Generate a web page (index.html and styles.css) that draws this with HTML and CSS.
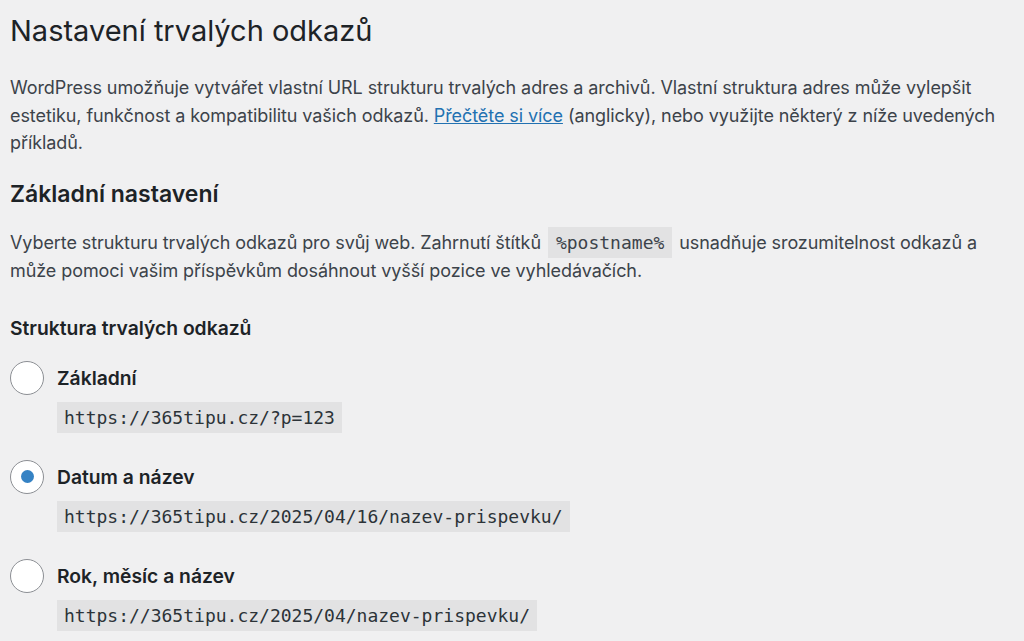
FILE: index.html
```html
<!DOCTYPE html>
<html lang="cs">
<head>
<meta charset="utf-8">
<title>Nastavení trvalých odkazů</title>
<link rel="stylesheet" href="styles.css">
</head>
<body>
<div class="wrap">
  <h1 class="page-title">Nastavení trvalých odkazů</h1>
  <p class="intro">WordPress umožňuje vytvářet vlastní URL strukturu trvalých adres a archivů. Vlastní struktura adres může vylepšit estetiku, funkčnost a kompatibilitu vašich odkazů. <a href="#" class="link">Přečtěte si více</a> (anglicky), nebo využijte některý z níže uvedených příkladů.</p>
  <h2 class="section-title">Základní nastavení</h2>
  <p class="desc">Vyberte strukturu trvalých odkazů pro svůj web. Zahrnutí štítků <code class="tag">%postname%</code> usnadňuje srozumitelnost odkazů a může pomoci vašim příspěvkům dosáhnout vyšší pozice ve vyhledávačích.</p>
  <h3 class="field-title">Struktura trvalých odkazů</h3>
  <div class="options">
    <div class="option">
      <label class="option-label"><input type="radio" name="perm" class="radio"><span>Základní</span></label>
      <code class="example">https://365tipu.cz/?p=123</code>
    </div>
    <div class="option">
      <label class="option-label"><input type="radio" name="perm" class="radio" checked><span>Datum a název</span></label>
      <code class="example">https://365tipu.cz/2025/04/16/nazev-prispevku/</code>
    </div>
    <div class="option">
      <label class="option-label"><input type="radio" name="perm" class="radio"><span>Rok, měsíc a název</span></label>
      <code class="example">https://365tipu.cz/2025/04/nazev-prispevku/</code>
    </div>
  </div>
</div>
</body>
</html>
```
FILE: styles.css
```css
html, body {
  margin: 0;
  padding: 0;
  background: #f0f0f1;
}
body {
  font-family: Inter, "Noto Sans", sans-serif;
  color: #3c434a;
  font-size: 18px;
  letter-spacing: -0.08px;
  overflow: hidden;
}
.wrap {
  width: 1010px;
  padding: 10px 0 0 10px;
}
.page-title {
  margin: 0;
  font-size: 29px;
  font-weight: 400;
  line-height: 42px;
  letter-spacing: 0;
  color: #1d2327;
}
.intro {
  margin: 22px 0 0;
  line-height: 27.5px;
}
.link {
  color: #2271b1;
  text-decoration: underline;
}
.section-title {
  margin: 22px 0 0;
  font-size: 23px;
  font-weight: 600;
  line-height: 30px;
  letter-spacing: 0;
  color: #1d2327;
}
.desc {
  margin: 20px 0 0;
  line-height: 28px;
}
.tag {
  display: inline-block;
  font-family: "DejaVu Sans Mono", monospace;
  font-size: 18px;
  line-height: 25px;
  letter-spacing: 0;
  background: #e2e2e3;
  padding: 3px 8px;
  margin: -3px 2px;
}
.field-title {
  margin: 29px 0 0;
  font-size: 19.3px;
  font-weight: 600;
  line-height: 28px;
  letter-spacing: 0;
  color: #1d2327;
}
.options {
  display: flex;
  flex-direction: column;
  gap: 26px;
  margin-top: 18px;
}
.option {
  display: flex;
  flex-direction: column;
  align-items: flex-start;
  gap: 6px;
}
.option-label {
  display: flex;
  align-items: center;
  gap: 13px;
  height: 36px;
  font-size: 19.3px;
  font-weight: 600;
  letter-spacing: 0;
  color: #1d2327;
}
.radio {
  appearance: none;
  -webkit-appearance: none;
  margin: 0;
  width: 34px;
  height: 34px;
  border-radius: 50%;
  border: 1.5px solid #8c8f94;
  background: #fff;
  display: grid;
  place-items: center;
  box-sizing: border-box;
}
.radio:checked::before {
  content: "";
  width: 13px;
  height: 13px;
  border-radius: 50%;
  background: #3582c4;
}
.example {
  margin-left: 47px;
  font-family: "DejaVu Sans Mono", monospace;
  font-size: 18px;
  line-height: 25px;
  letter-spacing: 0;
  padding: 3px 7px;
  background: #e2e2e3;
  color: #2c3338;
}
```
